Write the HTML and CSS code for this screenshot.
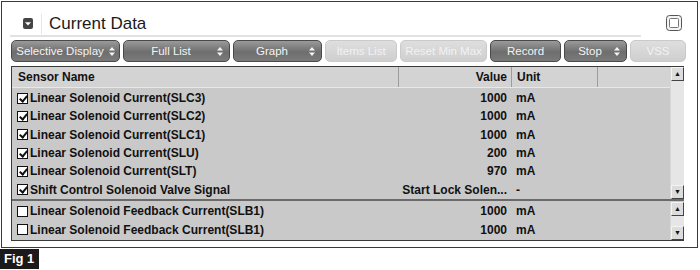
FILE: index.html
```html
<!DOCTYPE html>
<html lang="en">
<head>
  <meta charset="UTF-8">
  <title>Current Data</title>
  <link rel="stylesheet" href="styles.css">
</head>
<body>
  <div class="frame">
    <div class="title-row">
      <div class="title-bar">
        <span class="collapse-btn">
          <svg viewBox="0 0 10 11" width="10" height="11">
            <rect x="0" y="0" width="10" height="11" rx="2" fill="#444"/>
            <path d="M2 4.2h6L5 7.6z" fill="#fff"/>
          </svg>
        </span>
        <span class="title-sep"></span>
        <span class="title">Current Data</span>
      </div>
      <span class="window-btn">
        <svg viewBox="0 0 16 16" width="16" height="16">
          <rect x="0.5" y="0.5" width="15" height="15" rx="3" fill="#f4f4f4" stroke="#555"/>
          <rect x="3.5" y="3.5" width="9" height="9" rx="1" fill="#fff" stroke="#777"/>
        </svg>
      </span>
    </div>

    <div class="toolbar">
      <button class="tb-btn w-sel">Selective Display <svg class="spin" viewBox="0 0 6 9" width="6" height="9"><path d="M0 3.5L3 0l3 3.5zM0 5.5h6L3 9z" fill="#f4f4f4"/></svg></button>
      <button class="tb-btn w-full"><span class="lbl">Full List</span> <svg class="spin" viewBox="0 0 6 9" width="6" height="9"><path d="M0 3.5L3 0l3 3.5zM0 5.5h6L3 9z" fill="#f4f4f4"/></svg></button>
      <button class="tb-btn w-graph"><span class="lbl">Graph</span> <svg class="spin" viewBox="0 0 6 9" width="6" height="9"><path d="M0 3.5L3 0l3 3.5zM0 5.5h6L3 9z" fill="#f4f4f4"/></svg></button>
      <button class="tb-btn off w-items">Items List</button>
      <button class="tb-btn off w-reset">Reset Min Max</button>
      <button class="tb-btn w-rec">Record</button>
      <button class="tb-btn w-stop"><span class="lbl">Stop</span> <svg class="spin" viewBox="0 0 6 9" width="6" height="9"><path d="M0 3.5L3 0l3 3.5zM0 5.5h6L3 9z" fill="#f4f4f4"/></svg></button>
      <button class="tb-btn off w-vss">VSS</button>
    </div>

    <div class="grid">
      <div class="pane pane-main">
        <div class="rows">
          <div class="row head">
            <span class="c-name">Sensor Name</span>
            <span class="c-val">Value</span>
            <span class="c-unit">Unit</span>
            <span class="c-rest"></span>
          </div>
          <div class="row"><span class="c-name"><i class="cb on"></i>Linear Solenoid Current(SLC3)</span><span class="c-val">1000</span><span class="c-unit">mA</span></div>
          <div class="row"><span class="c-name"><i class="cb on"></i>Linear Solenoid Current(SLC2)</span><span class="c-val">1000</span><span class="c-unit">mA</span></div>
          <div class="row"><span class="c-name"><i class="cb on"></i>Linear Solenoid Current(SLC1)</span><span class="c-val">1000</span><span class="c-unit">mA</span></div>
          <div class="row"><span class="c-name"><i class="cb on"></i>Linear Solenoid Current(SLU)</span><span class="c-val">200</span><span class="c-unit">mA</span></div>
          <div class="row"><span class="c-name"><i class="cb on"></i>Linear Solenoid Current(SLT)</span><span class="c-val">970</span><span class="c-unit">mA</span></div>
          <div class="row"><span class="c-name"><i class="cb on"></i>Shift Control Solenoid Valve Signal</span><span class="c-val">Start Lock Solen...</span><span class="c-unit">-</span></div>
        </div>
        <div class="scrollbar">
          <span class="sb-arrow">&#9650;</span>
          <span class="sb-track"></span>
          <span class="sb-arrow">&#9660;</span>
        </div>
      </div>
      <div class="pane pane-sub">
        <div class="rows">
          <div class="row"><span class="c-name"><i class="cb"></i>Linear Solenoid Feedback Current(SLB1)</span><span class="c-val">1000</span><span class="c-unit">mA</span></div>
          <div class="row"><span class="c-name"><i class="cb"></i>Linear Solenoid Feedback Current(SLB1)</span><span class="c-val">1000</span><span class="c-unit">mA</span></div>
        </div>
        <div class="scrollbar">
          <span class="sb-arrow">&#9650;</span>
          <span class="sb-track"></span>
          <span class="sb-arrow">&#9660;</span>
        </div>
      </div>
    </div>
  </div>
  <div class="fig-label">Fig 1</div>
</body>
</html>
```

FILE: styles.css
```css
* {
  margin: 0;
  padding: 0;
  box-sizing: border-box;
}

body {
  background-color: #ffffff;
  font-family: "Liberation Sans", Arial, sans-serif;
  color: #111;
  padding: 1px 0 0 1px;
}

.frame {
  width: 697px;
  height: 247px;
  border: 1px solid #3a3a3a;
  display: flex;
  flex-direction: column;
}

/* title */
.title-row {
  display: flex;
  align-items: flex-start;
  height: 35px;
  padding-left: 8px;
}

.title-bar {
  display: flex;
  align-items: center;
  width: 631px;
  height: 35px;
  border-bottom: 2px solid #e2e2e2;
  padding: 10px 0 0 13px;
}

.collapse-btn {
  display: flex;
  width: 10px;
  height: 11px;
}

.title-sep {
  width: 1px;
  height: 20px;
  background-color: #e6e6e6;
  margin: 0 7px 0 8px;
}

.title {
  font-size: 17px;
  color: #1a1a1a;
}

.window-btn {
  display: flex;
  margin: 13px 0 0 25px;
}

/* toolbar */
.toolbar {
  display: flex;
  gap: 3px;
  margin: 3px 0 0 9px;
  height: 22px;
}

.tb-btn {
  height: 22px;
  border: 1px solid #4a4a4a;
  border-radius: 5px;
  background: linear-gradient(#9a9a9a, #6e6e6e 55%, #7a7a7a);
  color: #f4f4f4;
  font-family: "Liberation Sans", Arial, sans-serif;
  font-size: 11.5px;
  display: flex;
  align-items: center;
  justify-content: center;
  padding: 0 6px;
  white-space: nowrap;
}

.tb-btn .lbl {
  flex: 1;
  text-align: center;
}

.tb-btn .spin {
  margin-left: 5px;
  flex: none;
}

.tb-btn.off {
  background: linear-gradient(#dedede, #cfcfcf);
  border-color: #cacaca;
  color: #f2f2f2;
}

.w-sel { width: 109px; }
.w-full { width: 107px; }
.w-graph { width: 89px; }
.w-items { width: 72px; }
.w-reset { width: 87px; }
.w-rec { width: 71px; }
.w-stop { width: 63px; }
.w-vss { width: 56px; }

/* grid */
.grid {
  margin: 4px 0 0 9px;
  width: 673px;
  border: 1px solid #3a3a3a;
  border-right: none;
  display: flex;
  flex-direction: column;
}

.pane {
  display: flex;
  background-color: #c9c9c9;
}

.pane-main {
  height: 134px;
  border-bottom: 2px solid #6a6a6a;
}

.pane-sub {
  height: 39px;
  padding-top: 1px;
}

.rows {
  flex: 1;
  display: flex;
  flex-direction: column;
}

.row {
  display: flex;
  align-items: center;
  height: 18.5px;
  font-size: 12px;
  font-weight: bold;
  white-space: nowrap;
}

.row.head {
  height: 21px;
  background-color: #d3d3d3;
  border-bottom: 1px solid #e8e8e8;
  margin-bottom: 1px;
}

.c-name {
  width: 386px;
  display: flex;
  align-items: center;
  padding-left: 5px;
}

.head .c-name {
  padding-left: 6px;
}

.c-val {
  width: 113px;
  text-align: right;
  padding-right: 4px;
}

.c-unit {
  width: 86px;
  padding-left: 5px;
}

.head span {
  height: 100%;
  display: flex;
  align-items: center;
}

.head .c-val {
  justify-content: flex-end;
  border-left: 1px solid #9c9c9c;
}

.head .c-unit {
  border-left: 1px solid #9c9c9c;
}

.head .c-rest {
  flex: 1;
  border-left: 1px solid #9c9c9c;
}

.cb {
  width: 11px;
  height: 11px;
  border: 1px solid #111;
  background-color: #fff;
  margin-right: 2px;
  position: relative;
  flex: none;
}

.cb.on::after {
  content: "";
  position: absolute;
  left: 3px;
  top: 0;
  width: 3px;
  height: 6px;
  border: solid #111;
  border-width: 0 2px 2px 0;
  transform: rotate(40deg);
}

/* scrollbar */
.scrollbar {
  width: 14px;
  display: flex;
  flex-direction: column;
  background-color: #e6e6e6;
  border-left: 1px solid #d8d8d8;
}

.sb-arrow {
  height: 14px;
  background-color: #dcdcdc;
  border: 1px solid;
  border-color: #f4f4f4 #444 #444 #f4f4f4;
  font-size: 7px;
  line-height: 12px;
  text-align: center;
  color: #111;
}

.sb-track {
  flex: 1;
}

.fig-label {
  display: inline-block;
  margin: 1px 0 0 -1px;
  background-color: #1a1a1a;
  color: #fff;
  font-weight: bold;
  font-size: 13px;
  padding: 2px 5px 3px 4px;
}
```
